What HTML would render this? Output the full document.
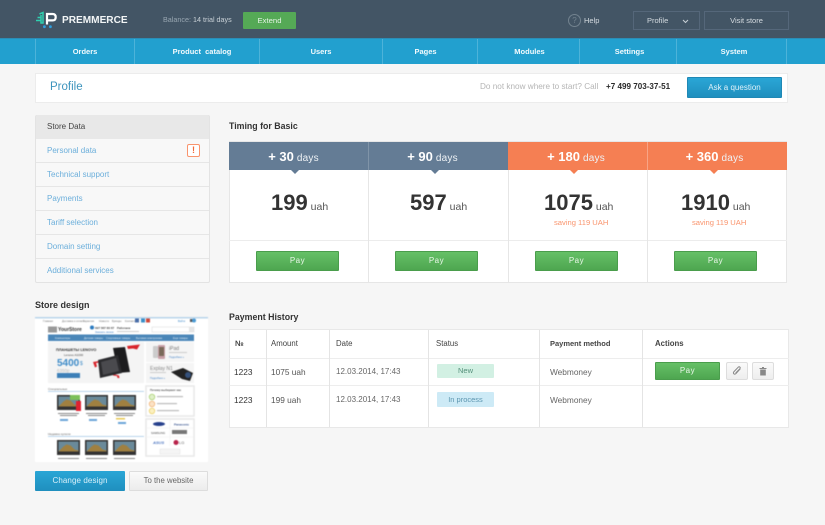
<!DOCTYPE html>
<html><head><meta charset="utf-8"><title>Premmerce Profile</title>
<style>
*{box-sizing:border-box;margin:0;padding:0}
html,body{width:825px;height:525px;overflow:hidden;background:#f6f6f6;font-family:"Liberation Sans",Arial,sans-serif}
body{position:relative}
div,span.t{position:absolute}
.c{text-align:center;white-space:nowrap}
.n{white-space:nowrap}
.nav{top:39px;height:25px;line-height:25px;color:#f2fafd;font-size:7.5px;font-weight:bold;text-align:center;border-left:1px solid #4db3d9}
.side{left:36px;width:173px;height:24px;line-height:23px;padding-left:11px;font-size:8px;color:#6cafdb;border-bottom:1px solid #e6e6e6}
.h{top:142px;height:28px;line-height:30px;text-align:center;color:#eef2f5;font-size:10px;letter-spacing:.2px;white-space:nowrap}
.h b{font-size:13px;font-weight:bold;color:#fff;letter-spacing:0}
.h i{position:absolute;left:62px;top:28px;width:0;height:0;border:4px solid transparent;border-bottom:0}
.price{top:189px;height:28px;line-height:28px;color:#555;font-size:10.5px;white-space:nowrap}
.price b{font-size:22px;color:#333;font-weight:bold}
.sv{top:217px;height:12px;line-height:12px;font-size:7.6px;color:#f9946d;white-space:nowrap}
.g{background:linear-gradient(#66c067,#4ea650);border:1px solid #4a9d4c;border-radius:1px;color:#e8f6e8;text-align:center;font-size:8px;letter-spacing:.5px}
.th{top:339px;font-size:7.8px;font-weight:bold;color:#444;white-space:nowrap}
.td{font-size:8.3px;color:#555;white-space:nowrap}
.v{top:330px;height:97px;width:1px;background:#e4e4e4}
.ib{top:362px;width:22px;height:18px;background:linear-gradient(#fafafa,#eee);border:1px solid #ddd;border-radius:2px}
</style></head><body>

<!-- header -->
<div style="left:0;top:0;width:825px;height:38px;background:#435565"></div>
<svg style="position:absolute;left:33px;top:9px" width="26" height="20" viewBox="0 0 26 20">
<path d="M3 11.500h4.500M4.500 8.500h3M6.500 5L10 3.500V14H8V6" fill="none" stroke="#2fd0b0" stroke-width="1.500"/>
<path d="M14 15.500V5h5.500q3.200 0 3.200 3.200t-3.200 3.200h-4.500" fill="none" stroke="#fff" stroke-width="2.200"/>
<rect x="10" y="16.300" width="2.800" height="2.800" rx="1.400" fill="#2f9fe0"/><rect x="16" y="16.300" width="2.800" height="2.800" rx="1.400" fill="#2f9fe0"/>
</svg>
<div class="n" style="left:62px;top:14px;font-size:10.1px;font-weight:bold;color:#f2f5f6;line-height:14px">PREMMERCE</div>
<div class="n" style="left:163px;top:14px;font-size:7.2px;line-height:12px;color:#98a6b1">Balance: <span style="color:#c9d1d7">14 trial days</span></div>
<div class="c" style="left:243px;top:12px;width:53px;height:17px;line-height:17px;background:#55a956;border-radius:1px;color:#e4f3e4;font-size:7.7px">Extend</div>
<div style="left:568px;top:14px;width:13px;height:13px;border:1px solid #73838f;border-radius:50%;text-align:center;font-size:8px;line-height:11px;color:#73838f">?</div>
<div class="n" style="left:584px;top:15px;font-size:7.5px;line-height:11px;color:#d5dbe0">Help</div>
<div style="left:633px;top:11px;width:67px;height:19px;border:1px solid #55677a"></div>
<div class="n" style="left:647px;top:15px;font-size:7.5px;line-height:11px;color:#d5dbe0">Profile</div>
<svg style="position:absolute;left:682px;top:19px" width="7" height="5"><path d="M1 1l2.500 2.500L6 1" fill="none" stroke="#c8d0d6"/></svg>
<div class="c" style="left:704px;top:11px;width:85px;height:19px;line-height:18px;border:1px solid #55677a;color:#d5dbe0;font-size:7.5px">Visit store</div>

<!-- nav -->
<div style="left:0;top:38px;width:825px;height:26px;background:#22a0cf;border-top:1px solid #2b8db6"></div>
<div class="nav" style="left:35px;width:99px">Orders</div>
<div class="nav" style="left:134px;width:125px;padding-left:10px">Product&nbsp; catalog</div>
<div class="nav" style="left:259px;width:123px">Users</div>
<div class="nav" style="left:382px;width:95px;padding-right:9px">Pages</div>
<div class="nav" style="left:477px;width:102px;padding-left:2px">Modules</div>
<div class="nav" style="left:579px;width:97px;padding-left:3px">Settings</div>
<div class="nav" style="left:676px;width:111px;border-right:1px solid #4db3d9;padding-left:5px">System</div>

<!-- profile bar -->
<div style="left:35px;top:73px;width:753px;height:30px;background:#fff;border:1px solid #ececec"></div>
<div class="n" style="left:50px;top:80px;font-size:11.500px;line-height:15px;color:#3d94bd">Profile</div>
<div class="n" style="left:480px;top:81px;font-size:8.2px;line-height:12px;color:#b5b5b5">Do not know where to start? Call</div>
<div class="n" style="left:606px;top:81px;font-size:8.1px;line-height:12px;font-weight:bold;color:#2a2a2a">+7 499 703-37-51</div>
<div class="c" style="left:687px;top:77px;width:95px;height:21px;line-height:20px;background:linear-gradient(#2aa6d6,#1f8fbe);border:1px solid #1f88b5;border-radius:1px;color:#dff2fa;font-size:8px">Ask a question</div>

<!-- sidebar -->
<div style="left:35px;top:115px;width:175px;height:168px;background:#f8f8f8;border:1px solid #e3e3e3;border-radius:2px"></div>
<div class="side" style="top:115px;height:24px;background:#e8e8e8;color:#444;border-radius:2px 2px 0 0;border-bottom:0;line-height:24px">Store Data</div>
<div class="side" style="top:139px">Personal data</div>
<div class="side" style="top:163px">Technical support</div>
<div class="side" style="top:187px">Payments</div>
<div class="side" style="top:211px">Tariff selection</div>
<div class="side" style="top:235px">Domain setting</div>
<div class="side" style="top:259px;border-bottom:0">Additional services</div>
<div class="c" style="left:187px;top:144px;width:13px;height:13px;border:1px solid #f9946d;border-radius:2px;background:#fff;color:#f26a3a;font-size:9px;font-weight:bold;line-height:11px">!</div>

<!-- store design -->
<div class="n" style="left:35px;top:299px;font-size:9px;line-height:13px;font-weight:bold;color:#333">Store design</div>
<svg style="position:absolute;left:35px;top:317px;filter:blur(.5px)" width="173" height="145" viewBox="35 317 173 145" font-family="Liberation Sans, sans-serif">
<rect x="35" y="317" width="173" height="145" fill="#fff"/>
<rect x="35" y="317" width="173" height="1.500" fill="#b9d4ea"/>
<g font-size="2.600" fill="#777"><text x="43" y="322">Главная</text><text x="62" y="322">Доставка и оплата</text><text x="83" y="322">Гарантия</text><text x="99" y="322">Новости</text><text x="112" y="322">Бренды</text><text x="125" y="322">Контакты</text><text x="178" y="322" fill="#3a86c8">Войти</text></g>
<rect x="135" y="318.500" width="4" height="4" fill="#4a6ea9"/><rect x="141" y="318.500" width="4" height="4" fill="#3a8fc8"/><rect x="146" y="318.500" width="4" height="4" fill="#d0493a"/>
<rect x="190" y="319" width="3" height="3" fill="#555"/><circle cx="194" cy="320.500" r="2" fill="#4a9ad4"/>
<rect x="48" y="326.500" width="9" height="6" fill="#999"/>
<text x="58" y="331" font-size="5" font-weight="bold" fill="#333">YourStore</text>
<circle cx="92" cy="327.500" r="2" fill="#2a7ac0"/><text x="95" y="329" font-size="3" font-weight="bold" fill="#444">097 567 80 67</text><text x="95" y="333" font-size="2.500" fill="#4a86c8">Заказать звонок</text>
<text x="117" y="329" font-size="2.800" font-weight="bold" fill="#444">Работаем</text><rect x="117" y="331" width="22" height="1" fill="#ccc"/>
<rect x="152" y="327" width="42" height="5" fill="#fff" stroke="#ddd" stroke-width=".6"/><rect x="189" y="327" width="5" height="5" fill="#e5e5e5"/>
<rect x="48" y="334.500" width="146" height="6.500" fill="#4a86b8"/>
<g font-size="2.600" fill="#dfeaf4"><text x="55" y="339">Компьютеры</text><text x="84" y="339">Детские товары</text><text x="106" y="339">Спортивные товары</text><text x="136" y="339">Бытовая электроника</text><text x="173" y="339">Еще товары</text></g>
<rect x="48" y="342" width="96" height="41" fill="#f4f4f4"/>
<text x="56" y="351" font-size="3.800" font-weight="bold" fill="#333">ПЛАНШЕТЫ LENOVO</text>
<text x="64" y="356" font-size="3" fill="#444">Lenovo A1000</text>
<text x="57" y="366" font-size="10" font-weight="bold" fill="#3e8bc8">5400</text><text x="80" y="365" font-size="5" fill="#3e8bc8">$</text>
<text x="57" y="372" font-size="4.500" fill="#bbb">6350р</text>
<rect x="57" y="373" width="23" height="5" fill="#3d7fb8"/>
<path d="M93 362l6-1 1 1.500-4 .5 1 3.500-2 1zM113 374l6 1.500 .5 2.500-2 0-.5-2-4-.5zM127 346l13-1.500-3 5-4-1-5 .5z" fill="#d8232a"/>
<path d="M113 348l12-1 5 25-12 1z" fill="#1c1c1e"/>
<path d="M98 360l20-5 4 18-22 5z" fill="#2b2b2e"/><path d="M101 362l15-4 3 13-16 4z" fill="#4a4a4e"/>
<rect x="146" y="342" width="48" height="20" fill="#f5f5f5"/>
<rect x="153" y="346" width="5" height="12" rx="1" fill="#ccc"/><rect x="158" y="345" width="7" height="14" rx="1" fill="#c9a0a8"/><rect x="159" y="347" width="5" height="9" fill="#7a6a5a"/>
<text x="169" y="350" font-size="5" fill="#777">iPad</text><rect x="169" y="352" width="18" height="1" fill="#ccc"/><text x="169" y="358" font-size="2.500" fill="#4a86c8">Подробнее »</text>
<rect x="146" y="363" width="48" height="20" fill="#f5f5f5"/>
<text x="150" y="370" font-size="5" fill="#888">Explay N1</text><rect x="150" y="372" width="16" height="1" fill="#ccc"/><text x="150" y="379" font-size="2.500" fill="#4a86c8">Подробнее »</text>
<path d="M171 372l12-4 10 5-3 8-8-2z" fill="#222"/><circle cx="188" cy="375" r="3" fill="#34507a"/>
<text x="48" y="390" font-size="3" fill="#666">Специальные</text><rect x="48" y="391" width="96" height=".8" fill="#a9cbe6"/>
<rect x="146" y="386" width="48" height="30" fill="#fff" stroke="#e8e8e8" stroke-width="1.500"/>
<text x="150" y="391" font-size="2.800" font-weight="bold" fill="#555">Почему выбирают нас</text>
<circle cx="152" cy="397" r="2.800" fill="#dff0c8" stroke="#9bc85a" stroke-width=".6"/><rect x="157" y="396" width="26" height="1.200" fill="#bbb"/>
<circle cx="152" cy="404" r="2.800" fill="#fbe2c5" stroke="#f0a860" stroke-width=".6"/><rect x="157" y="403" width="20" height="1.200" fill="#bbb"/>
<circle cx="152" cy="411" r="2.800" fill="#fbf0c0" stroke="#e8c850" stroke-width=".6"/><rect x="157" y="410" width="22" height="1.200" fill="#bbb"/>
<rect x="146" y="419" width="48" height="37" fill="#fff" stroke="#e8e8e8" stroke-width="1.500"/>
<path d="M170 419v27M147 428h46M147 437h46" stroke="#eee" stroke-width=".5"/>
<ellipse cx="159" cy="424" rx="6" ry="2" fill="#26408c"/>
<text x="174" y="425.500" font-size="3" font-weight="bold" fill="#34508c">Panasonic</text>
<text x="151" y="434" font-size="2.800" fill="#444">SAMSUNG</text>
<rect x="172" y="430" width="15" height="4" fill="#777"/>
<text x="153" y="444" font-size="4" font-style="italic" font-weight="bold" fill="#4a74c0">ASUS</text>
<circle cx="176" cy="442.500" r="2.500" fill="#b8234a"/><text x="179" y="444" font-size="4" fill="#666">LG</text>
<rect x="160" y="449" width="20" height="5" fill="#f5f5f5" stroke="#ddd" stroke-width=".4"/>
<rect x="48" y="392" width="96" height="36" fill="#fff"/>
<g id="tv"><rect x="57" y="395" width="23" height="15" fill="#333"/><rect x="58.500" y="396.500" width="20" height="10" fill="#6a8a9a"/><path d="M58.500 406.500l5-5 3-2 4 1 4 4 4 1v1z" fill="#a08040"/></g>
<use href="#tv" x="28"/><use href="#tv" x="56"/>
<rect x="70" y="395" width="10" height="5" fill="#7cc05a"/><rect x="76" y="401" width="5" height="10" fill="#e02030"/>
<g fill="#888"><rect x="58" y="413" width="21" height="1"/><rect x="60" y="415" width="17" height="1"/><rect x="86" y="413" width="21" height="1"/><rect x="88" y="415" width="17" height="1"/><rect x="114" y="413" width="21" height="1"/><rect x="116" y="415" width="17" height="1"/></g>
<g fill="#6aa4d8"><rect x="60" y="419" width="8" height="2"/><rect x="89" y="419" width="8" height="2"/><rect x="118" y="422" width="8" height="2"/></g>
<rect x="116" y="418" width="9" height="1.500" fill="#e8c850"/>
<text x="48" y="435" font-size="3" fill="#666">Недавно купили</text><rect x="48" y="436" width="96" height=".8" fill="#a9cbe6"/>
<g transform="translate(0 45)"><use href="#tv"/><use href="#tv" x="28"/><use href="#tv" x="56"/></g>
<g fill="#888"><rect x="58" y="458" width="21" height="1"/><rect x="86" y="458" width="21" height="1"/><rect x="114" y="458" width="21" height="1"/></g>
</svg>
<div class="c" style="left:35px;top:471px;width:90px;height:20px;line-height:20px;background:linear-gradient(#2aa6d6,#1f8fbe);border-radius:1px;color:#d8eff9;font-size:8px;letter-spacing:.1px">Change design</div>
<div class="c" style="left:129px;top:471px;width:79px;height:20px;line-height:18px;background:linear-gradient(#fafafa,#ececec);border:1px solid #ddd;border-radius:1px;color:#666;font-size:7.8px">To the website</div>

<!-- timing -->
<div class="n" style="left:229px;top:120px;font-size:8.800px;line-height:13px;font-weight:bold;color:#333">Timing for Basic</div>
<div style="left:229px;top:141px;width:558px;height:142px;background:#fff;border:1px solid #e6e6e6"></div>
<div style="left:229px;top:240px;width:558px;height:1px;background:#ececec"></div>
<div style="left:368px;top:142px;width:1px;height:141px;background:#e6e6e6"></div>
<div style="left:508px;top:142px;width:1px;height:141px;background:#e6e6e6"></div>
<div style="left:647px;top:142px;width:1px;height:141px;background:#e6e6e6"></div>
<div class="h" style="left:229px;width:139px;background:#647c95;padding-right:10px"><b>+ 30</b> days<i style="border-top:4px solid #647c95"></i></div>
<div class="h" style="left:369px;width:139px;background:#647c95;padding-right:12px"><b>+ 90</b> days<i style="border-top:4px solid #647c95"></i></div>
<div class="h" style="left:508px;width:139px;background:#f57f53;padding-right:3px"><b>+ 180</b> days<i style="border-top:4px solid #f57f53"></i></div>
<div class="h" style="left:648px;width:139px;background:#f57f53;padding-right:6px"><b>+ 360</b> days<i style="border-top:4px solid #f57f53"></i></div>
<div style="left:368px;top:142px;width:1px;height:28px;background:#8094a8"></div>
<div style="left:647px;top:142px;width:1px;height:28px;background:#f8a486"></div>
<div class="price" style="left:271px"><b>199</b> uah</div>
<div class="price" style="left:410px"><b>597</b> uah</div>
<div class="price" style="left:544px"><b>1075</b> uah</div>
<div class="price" style="left:681px"><b>1910</b> uah</div>
<div class="sv" style="left:554px">saving 119 UAH</div>
<div class="sv" style="left:692px">saving 119 UAH</div>
<div class="g" style="left:256px;top:251px;width:83px;height:20px;line-height:18px">Pay</div>
<div class="g" style="left:395px;top:251px;width:83px;height:20px;line-height:18px">Pay</div>
<div class="g" style="left:535px;top:251px;width:83px;height:20px;line-height:18px">Pay</div>
<div class="g" style="left:674px;top:251px;width:83px;height:20px;line-height:18px">Pay</div>

<!-- history -->
<div class="n" style="left:229px;top:311px;font-size:8.800px;line-height:13px;font-weight:bold;color:#333">Payment History</div>
<div style="left:229px;top:329px;width:560px;height:99px;background:#fff;border:1px solid #e8e8e8"></div>
<div style="left:229px;top:358px;width:560px;height:1px;background:#ededed"></div>
<div style="left:229px;top:385px;width:560px;height:1px;background:#ededed"></div>
<div class="v" style="left:266px"></div><div class="v" style="left:329px"></div><div class="v" style="left:428px"></div><div class="v" style="left:539px"></div><div class="v" style="left:642px"></div>
<div class="th" style="left:235px">№</div><div class="th" style="left:271px;font-weight:normal">Amount</div><div class="th" style="left:336px;font-weight:normal">Date</div><div class="th" style="left:436px;font-weight:normal">Status</div><div class="th" style="left:550px;font-size:7.500px">Payment method</div><div class="th" style="left:655px">Actions</div>
<div class="td" style="left:234px;top:367px;color:#333">1223</div>
<div class="td" style="left:271px;top:367px">1075 uah</div>
<div class="td" style="left:336px;top:367px;color:#666;font-size:8px">12.03.2014, 17:43</div>
<div class="c" style="left:437px;top:364px;width:57px;height:14px;line-height:14px;background:#d2f0e3;border-radius:1px;color:#55907a;font-size:7.500px">New</div>
<div class="td" style="left:550px;top:367px;color:#666">Webmoney</div>
<div class="g" style="left:655px;top:362px;width:65px;height:18px;line-height:16px">Pay</div>
<div class="ib" style="left:726px"></div><div class="ib" style="left:752px"></div>
<svg style="position:absolute;left:732px;top:366px" width="10" height="10" viewBox="0 0 10 10"><path d="M8.300 2.800L4 7.500q-1.300 1.200-2.200.3t.2-2.200L6.200 1.200q1-.8 1.700-.1t-.1 1.700L3.700 7" fill="none" stroke="#888" stroke-width="1"/></svg>
<svg style="position:absolute;left:758px;top:366px" width="10" height="10" viewBox="0 0 10 10"><path d="M1.500 2h7v1h-7zM4 1h2v1H4zM2.200 3.500h5.600V9.500H2.200z" fill="#888"/></svg>
<div class="td" style="left:234px;top:395px;color:#333">1223</div>
<div class="td" style="left:271px;top:395px">199 uah</div>
<div class="td" style="left:336px;top:395px;color:#666;font-size:8px">12.03.2014, 17:43</div>
<div class="c" style="left:437px;top:392px;width:57px;height:15px;line-height:15px;background:#cdeaf6;border-radius:1px;color:#5d96b0;font-size:7.500px">In process</div>
<div class="td" style="left:550px;top:395px;color:#666">Webmoney</div>
</body></html>
